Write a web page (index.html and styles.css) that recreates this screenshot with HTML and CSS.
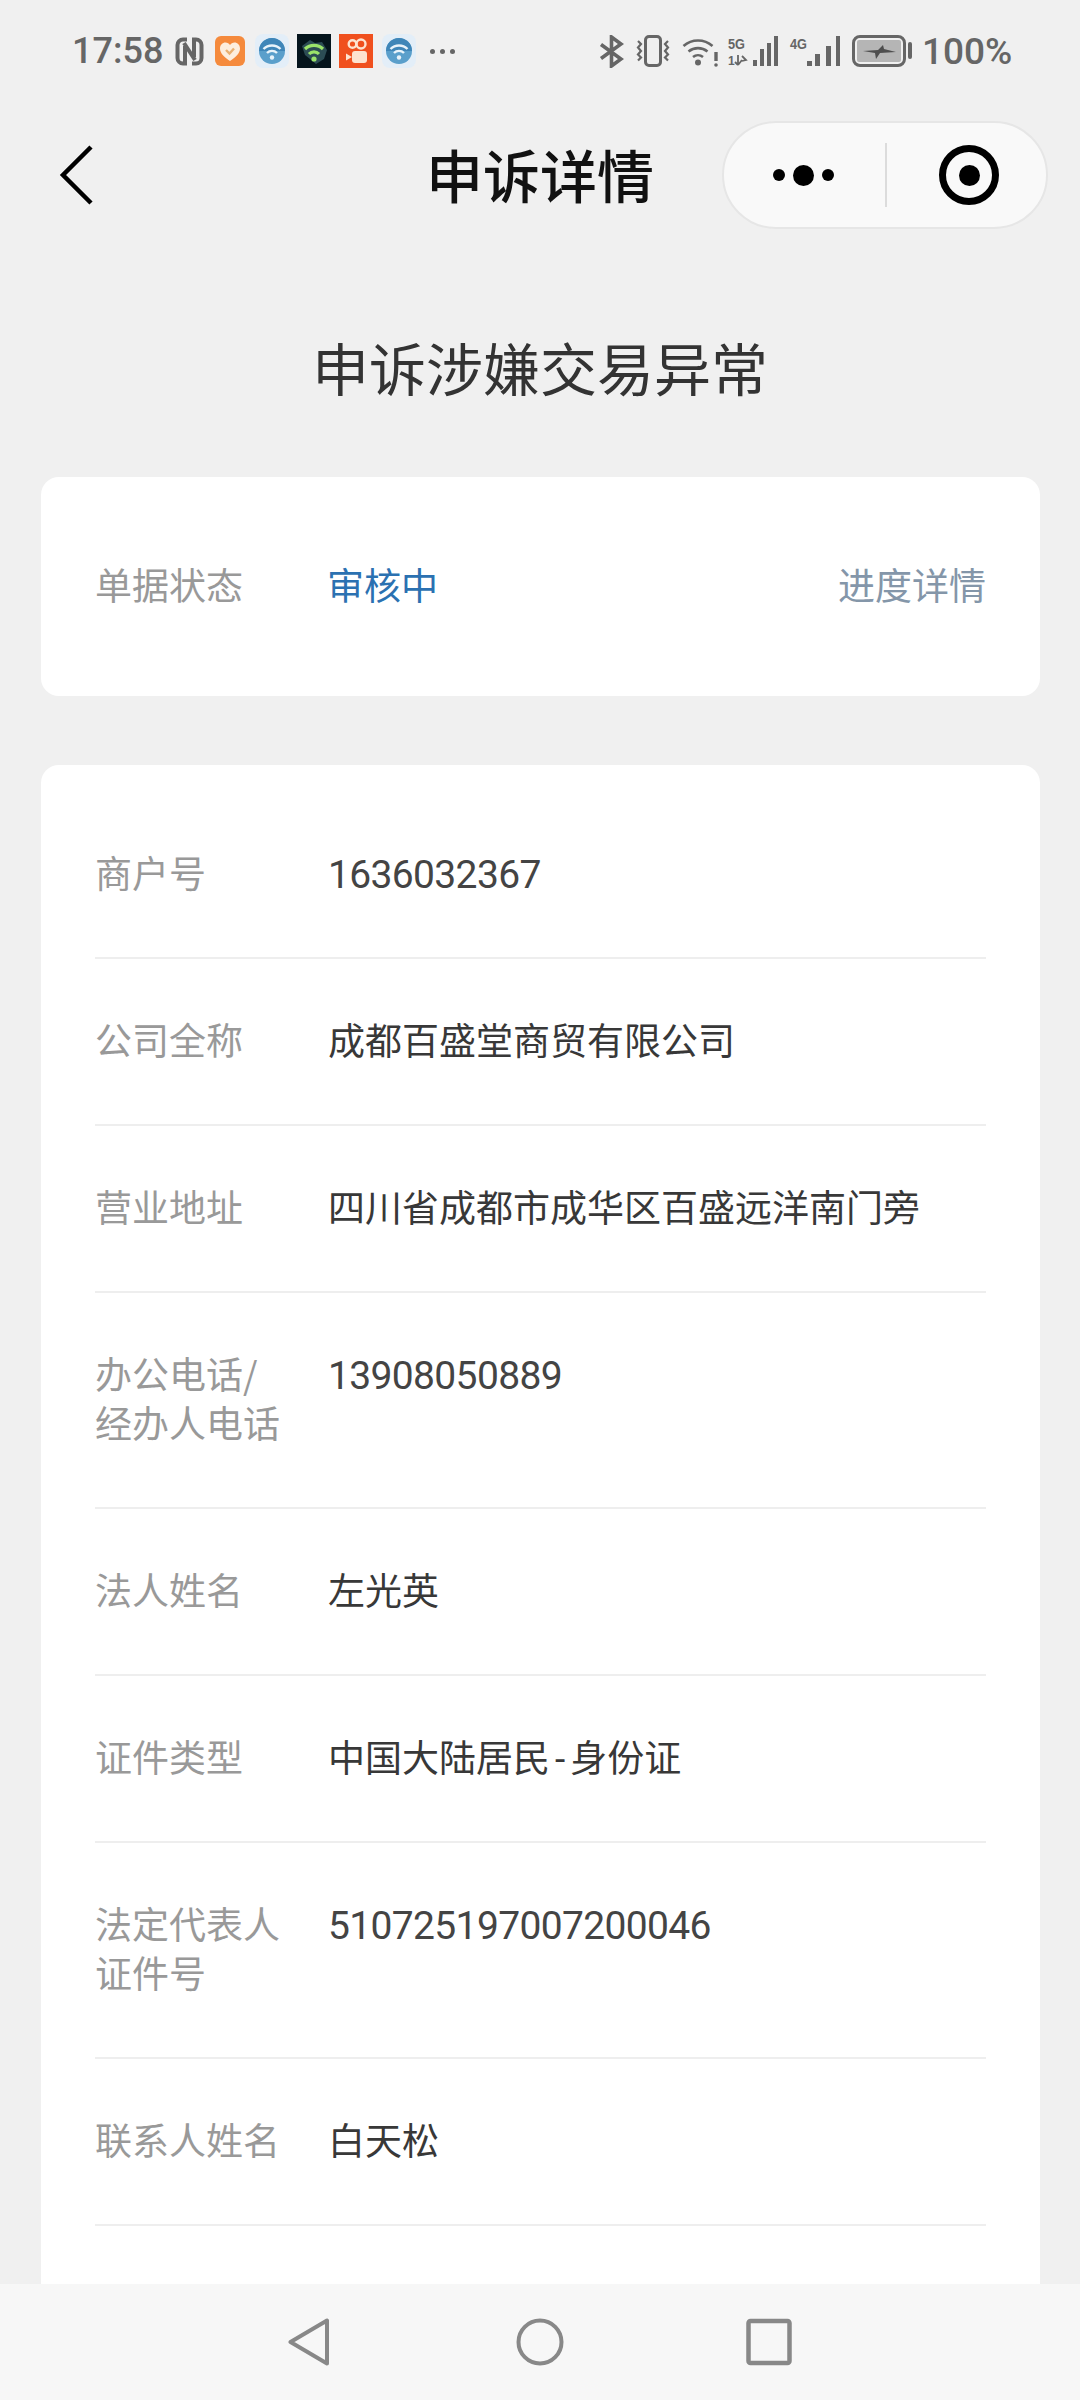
FILE: index.html
```html
<!DOCTYPE html>
<html lang="zh-CN">
<head>
    <meta charset="UTF-8">
    <meta name="viewport" content="width=device-width, initial-scale=1.0">
    <title>申诉详情</title>
    <link rel="stylesheet" href="styles.css">
</head>
<body>
    <div class="page">
        <div class="status-bar">
            <div class="status-left">
                <span class="clock">17:58</span>
                <svg class="ic-nfc" viewBox="0 0 29 29"><g fill="none" stroke="#666" stroke-width="4"><path d="M12 2.500H8A5.500 5.500 0 0 0 2.500 8v13A5.500 5.500 0 0 0 8 26.500h2V9"/><path d="M17 26.500h4a5.500 5.500 0 0 0 5.500-5.500V8A5.500 5.500 0 0 0 21 2.500h-2V20"/><path d="M9 6l11 17"/></g></svg>
                <svg class="ic-app ic-heart" viewBox="0 0 30 30"><rect width="30" height="30" rx="6" fill="#f58a3c"/><path d="M15 25C9 21 5 17 5 12.500 5 9 7.500 6.500 10.500 6.500 12.500 6.500 14 7.500 15 9 16 7.500 17.500 6.500 19.500 6.500 22.500 6.500 25 9 25 12.500 25 17 21 21 15 25Z" fill="#fdeedd"/><path d="M11 14l3.500 3.500 4.500-5" fill="none" stroke="#e9b070" stroke-width="2.400"/></svg>
                <svg class="ic-app ic-wifi" viewBox="0 0 34 34"><rect width="34" height="34" rx="8" fill="#e3eef8"/><circle cx="17" cy="17" r="13" fill="#5a9fcb"/><path d="M4 17a13 13 0 0 1 26 0Z" fill="#3f86b8"/><path d="M8.500 15a12 12 0 0 1 17 0M12 19a7 7 0 0 1 10 0" fill="none" stroke="#e8f3fa" stroke-width="2.400"/><circle cx="17" cy="23.500" r="2.200" fill="#e8f3fa"/></svg>
                <svg class="ic-app ic-dark" viewBox="0 0 34 34"><rect width="34" height="34" fill="#05141c"/><path d="M5 12l8-6 5 3 7-1 5 8-3 9-8 5-6-5-5-4Z" fill="#2c4c54"/><path d="M8 15a13 13 0 0 1 18 0M12 20a7 7 0 0 1 10 0" fill="none" stroke="#9be36a" stroke-width="3.200"/><circle cx="17" cy="25" r="2.600" fill="#9be36a"/></svg>
                <svg class="ic-app ic-kwai" viewBox="0 0 34 34"><rect width="34" height="34" fill="#f0501e"/><g fill="none" stroke="#fde3d0" stroke-width="2.400"><circle cx="13.500" cy="10" r="3.800"/><circle cx="22" cy="10" r="4.500"/></g><rect x="13" y="17" width="15" height="12" rx="3" fill="#fde3d0"/><path d="M13 23l-6-3.500v7Z" fill="#fde3d0"/></svg>
                <svg class="ic-app ic-wifi ic-wifi2" viewBox="0 0 34 34"><rect width="34" height="34" rx="8" fill="#e3eef8"/><circle cx="17" cy="17" r="13" fill="#5a9fcb"/><path d="M4 17a13 13 0 0 1 26 0Z" fill="#3f86b8"/><path d="M8.500 15a12 12 0 0 1 17 0M12 19a7 7 0 0 1 10 0" fill="none" stroke="#e8f3fa" stroke-width="2.400"/><circle cx="17" cy="23.500" r="2.200" fill="#e8f3fa"/></svg>
                <span class="more-dots"><i></i><i></i><i></i></span>
            </div>
            <div class="status-right">
                <svg class="ic-bt" viewBox="0 0 25 33"><path d="M2 9.500l20 14.500-9.500 7V2L22 9 2 23.500" fill="none" stroke="#666" stroke-width="3.600"/></svg>
                <svg class="ic-vib" viewBox="0 0 37 32"><rect x="10.500" y="1.500" width="15" height="29" rx="3.500" fill="none" stroke="#666" stroke-width="3"/><path d="M3 6l3 3-3 3.500 3 3.500-3 3.500 3 3-3 3M33 6l-3 3 3 3.500-3 3.500 3 3.500-3 3 3 3" fill="none" stroke="#666" stroke-width="2.200"/></svg>
                <svg class="ic-net" viewBox="0 0 37 32"><path d="M1.500 11a22 22 0 0 1 29 0M6.500 16.500a15 15 0 0 1 19 0M11 22a8 8 0 0 1 10 0" fill="none" stroke="#666" stroke-width="2.600"/><circle cx="16" cy="27.500" r="3" fill="#666"/><path d="M34 17v9" stroke="#666" stroke-width="3.400"/><circle cx="34" cy="30" r="1.800" fill="#666"/></svg>
                <svg class="ic-signal" viewBox="0 0 50 31"><text x="0" y="13" class="sig-label" textLength="17" lengthAdjust="spacingAndGlyphs">5G</text><text x="0" y="29" class="sig-label sig-tiny">1</text><path d="M10 19v10M10 29l4-5M10 29l-3-3" stroke="#666" stroke-width="1.800" fill="none"/><path d="M14 20l4 4-4 1" stroke="#666" stroke-width="1.800" fill="none"/><rect x="25" y="24" width="4" height="6" fill="#666"/><rect x="32" y="13" width="4" height="17" fill="#666"/><rect x="39" y="7" width="4" height="23" fill="#666"/><rect x="46" y="0" width="4" height="30" fill="#666"/></svg>
                <svg class="ic-signal" viewBox="0 0 50 31"><text x="0" y="13" class="sig-label" textLength="17" lengthAdjust="spacingAndGlyphs">4G</text><rect x="17" y="25" width="5" height="5" fill="#666"/><rect x="25" y="18" width="5" height="12" fill="#666"/><rect x="36" y="10" width="5" height="20" fill="#666"/><rect x="46" y="0" width="4" height="30" fill="#666"/></svg>
                <svg class="ic-batt" viewBox="0 0 60 32"><rect x="1.500" y="1.500" width="51" height="29" rx="6.500" fill="none" stroke="#666" stroke-width="3"/><rect x="5" y="5" width="44" height="22" rx="2" fill="#b5b5b5"/><path d="M11 16l15-1 5-5 1 4 12 3-16 1-4 6-1-6Z" fill="#4e4e4e"/><rect x="56" y="7" width="4" height="17" rx="2" fill="#666"/></svg>
                <span class="battery-text">100%</span>
            </div>
        </div>

        <div class="nav-bar">
            <svg class="back-icon" viewBox="0 0 34 60"><path d="M32 2L4 30l28 28" fill="none" stroke="#000" stroke-width="4.500"/></svg>
            <div class="nav-title">申诉详情</div>
            <div class="capsule">
                <div class="capsule-part capsule-more"><i class="dot-s"></i><i class="dot-l"></i><i class="dot-s"></i></div>
                <div class="capsule-line"></div>
                <div class="capsule-part capsule-home"><div class="target"></div></div>
            </div>
        </div>

        <h1 class="page-title">申诉涉嫌交易异常</h1>

        <div class="card card-status">
            <div class="label">单据状态</div>
            <div class="status-value">审核中</div>
            <div class="status-link">进度详情</div>
        </div>

        <div class="card card-info">
            <div class="row"><div class="label">商户号</div><div class="value num">1636032367</div></div>
            <div class="row"><div class="label">公司全称</div><div class="value">成都百盛堂商贸有限公司</div></div>
            <div class="row"><div class="label">营业地址</div><div class="value">四川省成都市成华区百盛远洋南门旁</div></div>
            <div class="row"><div class="label">办公电话/<br>经办人电话</div><div class="value num">13908050889</div></div>
            <div class="row"><div class="label">法人姓名</div><div class="value">左光英</div></div>
            <div class="row"><div class="label">证件类型</div><div class="value">中国大陆居民<span class="dash">-</span>身份证</div></div>
            <div class="row"><div class="label">法定代表人<br>证件号</div><div class="value num">510725197007200046</div></div>
            <div class="row"><div class="label">联系人姓名</div><div class="value">白天松</div></div>
        </div>

        <div class="sys-nav">
            <svg class="sys-btn" viewBox="0 0 42 48"><path d="M39 2.500v43L2.500 24Z" fill="none" stroke="#888" stroke-width="4" stroke-linejoin="round"/></svg>
            <svg class="sys-btn" viewBox="0 0 48 48"><circle cx="24" cy="24" r="21.500" fill="none" stroke="#888" stroke-width="4"/></svg>
            <svg class="sys-btn" viewBox="0 0 46 48"><rect x="2.500" y="3" width="41" height="42" rx="2" fill="none" stroke="#888" stroke-width="4.500"/></svg>
        </div>
    </div>
</body>
</html>
```

FILE: styles.css
```css
* {
    box-sizing: border-box;
}

body {
    margin: 0;
    padding: 0;
    background-color: #f0f0f0;
    font-family: "Noto Sans CJK SC", "Noto Sans", sans-serif;
}

.page {
    position: relative;
    width: 1080px;
    height: 2400px;
    overflow: hidden;
}

/* status bar */
.status-bar {
    height: 100px;
    padding: 2px 68px 0 72px;
    display: flex;
    align-items: center;
    justify-content: space-between;
}

.status-left,
.status-right {
    display: flex;
    align-items: center;
}

.clock {
    font-family: Roboto, sans-serif;
    font-size: 36px;
    font-weight: 500;
    color: #666;
    width: 91px;
}

.battery-text {
    font-family: Roboto, sans-serif;
    font-size: 37px;
    font-weight: 500;
    color: #666;
    width: 90px;
}

.ic-nfc {
    width: 29px;
    height: 29px;
    margin: 0 11px 0 12px;
}

.ic-app {
    height: 34px;
    width: 34px;
    margin-right: 8px;
}

.ic-heart {
    width: 30px;
    height: 30px;
    margin-right: 10px;
}

.ic-wifi2 {
    margin-left: 1px;
    margin-right: 0;
}

.more-dots {
    display: flex;
    gap: 5px;
    margin-left: 14px;
}

.more-dots i {
    width: 5px;
    height: 5px;
    border-radius: 50%;
    background-color: #666;
}

.ic-bt {
    width: 25px;
    height: 33px;
    margin-right: 11px;
}

.ic-vib,
.ic-net {
    width: 37px;
    height: 32px;
    margin-right: 10px;
}

.ic-signal {
    width: 50px;
    height: 31px;
    margin-right: 12px;
    overflow: visible;
}

.ic-net {
    margin-right: 9px;
}

.ic-batt {
    width: 60px;
    height: 32px;
    margin-right: 10px;
}

.sig-label {
    font-family: "Liberation Sans", sans-serif;
    font-size: 14px;
    font-weight: bold;
    fill: #666;
}

.sig-tiny {
    font-size: 12px;
}

/* nav bar */
.nav-bar {
    position: relative;
    height: 150px;
    display: flex;
    align-items: center;
    justify-content: center;
}

.back-icon {
    position: absolute;
    left: 59px;
    top: 45px;
    width: 34px;
    height: 60px;
}

.nav-title {
    margin-bottom: 4px;
    font-size: 57px;
    font-weight: 500;
    color: #111;
}

.capsule {
    position: absolute;
    left: 722px;
    top: 21px;
    width: 326px;
    height: 108px;
    border: 2px solid #e6e6e6;
    border-radius: 54px;
    background-color: #f9f9f9;
    display: flex;
    align-items: center;
}

.capsule-part {
    display: flex;
    align-items: center;
    justify-content: center;
    gap: 8px;
}

.capsule-more {
    width: 161px;
    padding-right: 2px;
}

.capsule-home {
    flex: 1;
    padding-left: 5px;
}

.capsule-line {
    width: 2px;
    height: 64px;
    background-color: #dcdcdc;
}

.dot-s {
    width: 12px;
    height: 12px;
    border-radius: 50%;
    background-color: #000;
}

.dot-l {
    width: 21px;
    height: 21px;
    border-radius: 50%;
    background-color: #000;
}

.target {
    width: 60px;
    height: 60px;
    border: 7px solid #000;
    border-radius: 50%;
    display: flex;
    align-items: center;
    justify-content: center;
}

.target::after {
    content: "";
    width: 21px;
    height: 21px;
    border-radius: 50%;
    background-color: #000;
}

/* content */
.page-title {
    margin: 76px 0 71px;
    font-size: 57px;
    line-height: 80px;
    font-weight: 400;
    text-align: center;
    color: #333;
}

.card {
    margin: 0 40px 0 41px;
    background-color: #fff;
    border-radius: 18px;
    font-size: 37px;
    line-height: 49px;
}

.label {
    width: 233px;
    flex-shrink: 0;
    color: #999;
}

.card-status {
    height: 219px;
    padding: 0 54px 5px;
    display: flex;
    align-items: center;
}

.status-value {
    flex: 1;
    margin-left: -1px;
    color: #2b71b1;
}

.status-link {
    color: #8496a9;
}

.card-info {
    margin-top: 69px;
    padding: 27px 54px 0;
    height: 1700px;
}

.row {
    display: flex;
    padding: 56px 0 60px;
    border-bottom: 2px solid #eee;
}

.value {
    color: #383838;
}

/* Roboto sits higher than the CJK face, the taller line drops it back */
.num {
    height: 49px;
    font-family: Roboto, sans-serif;
    font-size: 39px;
    line-height: 55px;
    letter-spacing: -0.65px;
    color: #444;
}

.dash {
    margin: 0 5px;
    font-family: Roboto, sans-serif;
    line-height: 0;
}

/* system buttons */
.sys-nav {
    position: absolute;
    left: 0;
    right: 0;
    bottom: 0;
    height: 116px;
    background-color: #f7f7f7;
}

.sys-btn {
    position: absolute;
    top: 34px;
    height: 48px;
}

.sys-btn:nth-child(1) {
    left: 288px;
    width: 42px;
}

.sys-btn:nth-child(2) {
    left: 516px;
    width: 48px;
}

.sys-btn:nth-child(3) {
    left: 746px;
    width: 46px;
}
```
